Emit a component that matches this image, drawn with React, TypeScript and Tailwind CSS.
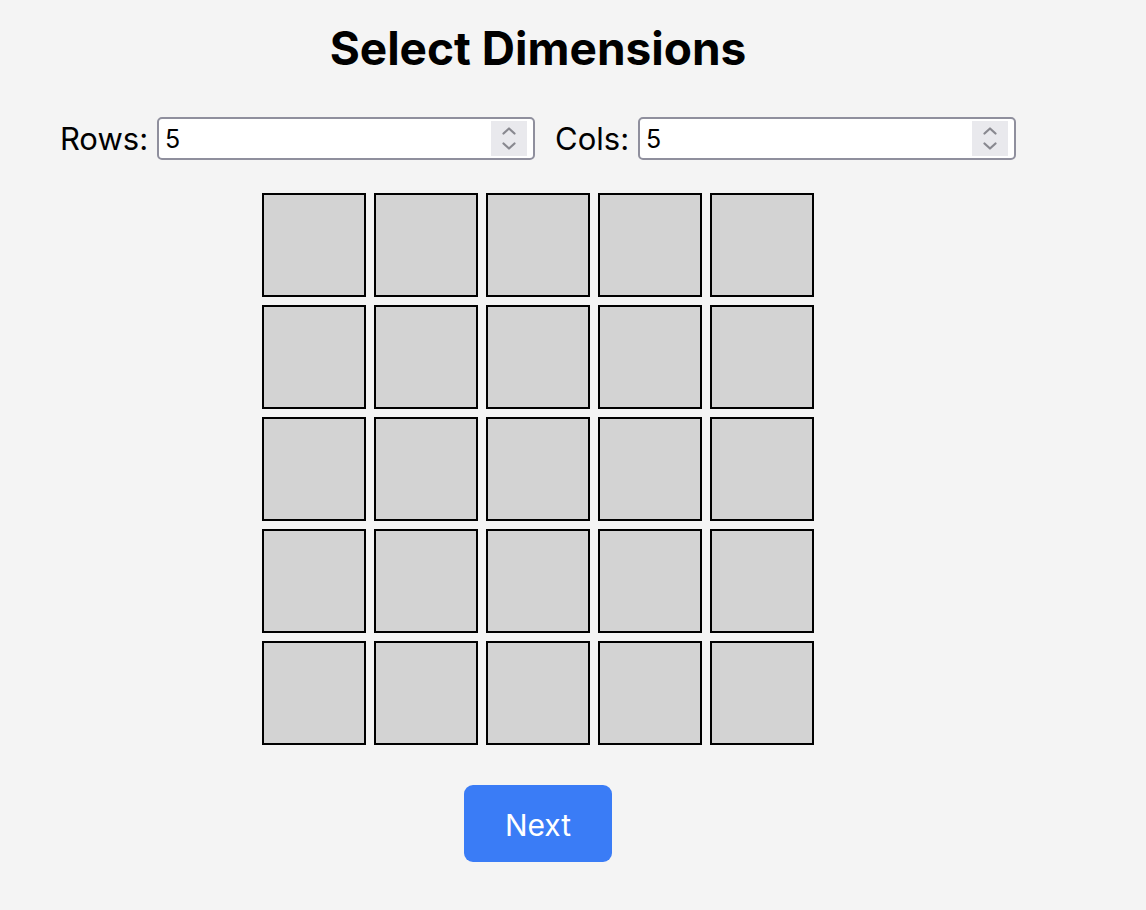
import { useState } from 'react'

function Chevron({ up }: { up?: boolean }) {
  return (
    <svg width="14" height="8" viewBox="0 0 14 8" fill="none">
      <path
        d={up ? 'M1.5 6.5 L7 1.5 L12.5 6.5' : 'M1.5 1.5 L7 6.5 L12.5 1.5'}
        stroke="#88888f"
        strokeWidth="2.2"
        strokeLinecap="round"
        strokeLinejoin="round"
      />
    </svg>
  )
}

function NumberField({
  label,
  value,
  onChange,
}: {
  label: string
  value: number
  onChange: (v: number) => void
}) {
  return (
    <label className="flex items-center gap-[9px]">
      <span className="text-[31px] leading-none text-black">{label}</span>
      <div className="flex h-[43px] w-[378px] items-center rounded-[5px] border-2 border-[#8f8f9d] bg-white pl-[6px] pr-[6px]">
        <input
          type="number"
          value={value}
          onChange={(e) => onChange(Number(e.target.value))}
          className="min-w-0 flex-1 bg-transparent text-[25px] leading-none text-black outline-none [appearance:textfield] [&::-webkit-inner-spin-button]:appearance-none [&::-webkit-outer-spin-button]:appearance-none"
        />
        <div className="flex h-[35px] w-[36px] flex-col items-center justify-center gap-[7px] bg-[#e9e9ed]">
          <button type="button" onClick={() => onChange(value + 1)} className="flex">
            <Chevron up />
          </button>
          <button type="button" onClick={() => onChange(Math.max(1, value - 1))} className="flex">
            <Chevron />
          </button>
        </div>
      </div>
    </label>
  )
}

export default function App() {
  const [rows, setRows] = useState(5)
  const [cols, setCols] = useState(5)

  return (
    <div className="min-h-screen w-full bg-[#f4f4f4] font-['Inter',sans-serif]">
      <div className="flex w-[1076px] flex-col items-center pt-[25px]">
        <h1 className="text-[46px] font-bold leading-[46px] text-black">Select Dimensions</h1>

        <div className="mt-[46px] flex items-center gap-[20px]">
          <NumberField label="Rows:" value={rows} onChange={setRows} />
          <NumberField label="Cols:" value={cols} onChange={setCols} />
        </div>

        <div
          className="mt-[33px] grid gap-2"
          style={{ gridTemplateColumns: `repeat(${cols}, 104px)` }}
        >
          {Array.from({ length: rows * cols }).map((_, i) => (
            <div key={i} className="h-[104px] w-[104px] border-2 border-black bg-[#d3d3d3]" />
          ))}
        </div>

        <button
          type="button"
          className="mt-[40px] h-[77px] w-[148px] rounded-[9px] bg-[#3a7cf6] pt-[3px] text-[30px] text-white"
        >
          Next
        </button>
      </div>
    </div>
  )
}
